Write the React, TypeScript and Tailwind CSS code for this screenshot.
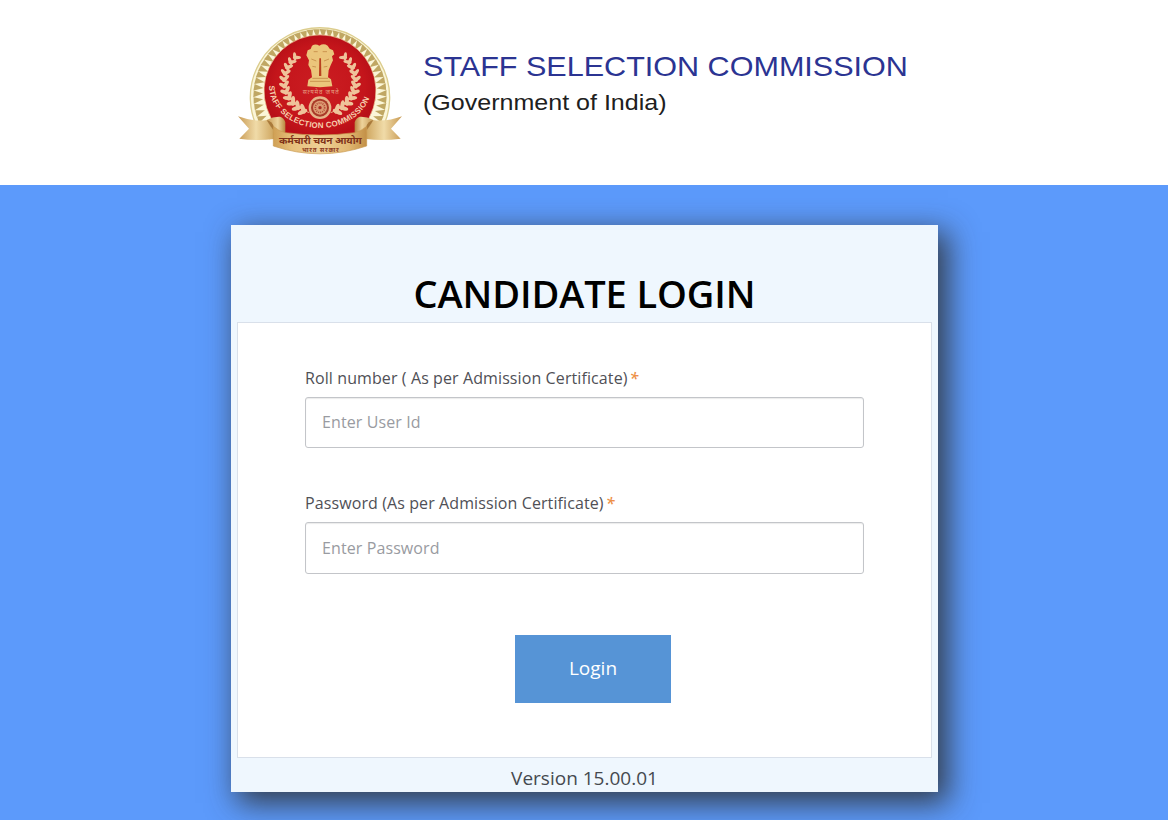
const fields = [
  {
    id: 'roll',
    label: 'Roll number ( As per Admission Certificate)',
    placeholder: 'Enter User Id',
    type: 'text',
    wrapClass: '',
    inputClass: 'h-[51px] pb-[2px]',
  },
  {
    id: 'password',
    label: 'Password (As per Admission Certificate)',
    placeholder: 'Enter Password',
    type: 'password',
    wrapClass: 'mt-[43px]',
    inputClass: 'h-[52px]',
  },
];

const leaves = Array.from({ length: 11 }, (_, i) => 112 + i * 11);
const rays = Array.from({ length: 46 }, (_, i) => 142 + i * (256 / 45));

const Laurel = () => (
  <g>
    <path d="M238 293A107 98 0 0 1 192 138" fill="none" stroke="#e5ae83" strokeWidth="3" />
    {leaves.map((deg, i) => {
      const rad = (deg * Math.PI) / 180;
      const x = 270 + 105 * Math.cos(rad);
      const y = 199 + 97 * Math.sin(rad);
      const size = 1.4 - i * 0.03;
      return (
        <g key={deg} transform={`translate(${x} ${y}) rotate(${deg}) scale(${size})`} fill="#efc39a">
          <ellipse cx="9" cy="3" rx="11" ry="4.5" transform="rotate(42)" />
          <ellipse cx="-8" cy="6" rx="11" ry="4.5" transform="rotate(-42)" />
        </g>
      );
    })}
  </g>
);

const RibbonTail = () => (
  <g>
    <path d="M24 304Q70 321 112 315Q123 338 132 344V372Q82 379 28 371L57 341Z" fill="url(#tail)" />
    <path d="M110 315Q130 304 150 305Q162 308 166 322V358L131 352Q129 330 110 315Z" fill="url(#fold)" />
    <path d="M110 315Q126 319 131 334V346Q123 338 110 315Z" fill="#a97a3a" />
  </g>
);

const Emblem = () => (
  <svg viewBox="0 0 540 450" className="h-[150px] w-[180px] shrink-0" role="img" aria-label="Staff Selection Commission">
    <defs>
      <linearGradient id="gold" x1="0" x2="1">
        <stop offset="0" stopColor="#d0a055" />
        <stop offset=".2" stopColor="#e6c07c" />
        <stop offset=".5" stopColor="#eed096" />
        <stop offset=".8" stopColor="#e1b873" />
        <stop offset="1" stopColor="#c39047" />
      </linearGradient>
      <linearGradient id="tail" x1="0" x2="1">
        <stop offset="0" stopColor="#c99b55" />
        <stop offset=".5" stopColor="#f0dba8" />
        <stop offset="1" stopColor="#cfa65f" />
      </linearGradient>
      <linearGradient id="fold" x1="0" x2="1">
        <stop offset="0" stopColor="#c79a55" />
        <stop offset=".6" stopColor="#edd39b" />
        <stop offset="1" stopColor="#b9853f" />
      </linearGradient>
      <radialGradient id="red">
        <stop offset="0" stopColor="#cb1d22" />
        <stop offset=".8" stopColor="#c4151b" />
        <stop offset="1" stopColor="#b81018" />
      </radialGradient>
      <path id="arc" d="M117 212A154 127 0 0 0 425 212" />
    </defs>

    {/* rim */}
    <path d="M88 350A209 209 0 1 1 452 350Z" fill="#fbf6d8" stroke="#dccd8e" strokeWidth="4" />
    {rays.map((deg) => (
      <path key={deg} d="M171 1L200 -11L199 9Z" fill="#c0a763" transform={`translate(270 242) rotate(${deg})`} />
    ))}
    <path d="M140 366V334A168 168 0 1 1 400 334V366Z" fill="url(#red)" stroke="#f3dda6" strokeWidth="2" />

    <Laurel />
    <g transform="translate(540 0) scale(-1 1)">
      <Laurel />
    </g>

    {/* lion capital */}
    <g fill="#ebc57b">
      <path d="M246 92Q257 85 268 92Q281 84 293 92L299 101L309 106L313 118L306 124L309 136L302 151L296 166L294 187L303 193L307 214Q270 219 232 214L235 194L246 187L243 165L235 150L237 136L229 121L233 106L242 102Z" />
      <path d="M268 130L273 130L274 183L267 183Z" fill="#b9411f" />
      <path d="M251 110H263M278 110H291M244 132L259 138M297 132L282 138M247 154L258 156M292 154L281 156M240 199H300M247 190H294" fill="none" stroke="#cb9550" strokeWidth="3" />
    </g>
    <text x="272" y="236" textAnchor="middle" textLength="108" className="fill-[#e7a184] font-['Noto_Sans_Devanagari','Noto_Sans',sans-serif] text-[18px]">सत्यमेव जयते</text>

    {/* wheel */}
    <circle cx="270" cy="278" r="34" fill="#e7b48a" />
    <circle cx="270" cy="278" r="27" fill="#a93a28" />
    <circle cx="270" cy="278" r="21" fill="#dc9c73" />
    <circle cx="270" cy="278" r="14" fill="none" stroke="#b44a35" strokeWidth="5" strokeDasharray="3 3" />
    <circle cx="270" cy="278" r="5" fill="#a92d22" />

    <text className="fill-[#f6cfae] font-['Liberation_Sans',sans-serif] text-[24px] font-bold">
      <textPath href="#arc" textLength="404">STAFF SELECTION COMMISSION</textPath>
    </text>

    {/* ribbon */}
    <RibbonTail />
    <g transform="translate(540 0) scale(-1 1)">
      <RibbonTail />
    </g>
    <path d="M130 334Q148 350 166 353Q270 367 374 353Q392 350 410 334V393Q270 440 130 393Z" fill="url(#gold)" stroke="#c9994f" strokeWidth="2" />
    <text x="271" y="386" textAnchor="middle" textLength="248" className="fill-[#7e3219] font-['Noto_Sans_Devanagari','Noto_Sans',sans-serif] text-[30px] font-bold">कर्मचारी चयन आयोग</text>
    <text x="271" y="411" textAnchor="middle" textLength="110" className="fill-[#8c3820] font-['Noto_Sans_Devanagari','Noto_Sans',sans-serif] text-[18px] font-bold">भारत सरकार</text>
  </svg>
);

const Header = () => (
  <header className="flex h-[185px] bg-white pt-[15px] pl-[230px]">
    <Emblem />
    <div className="pt-[34px] pl-[13px] font-['Liberation_Sans',sans-serif] whitespace-nowrap">
      <h2 className="origin-left scale-x-[1.072] text-[28.5px] leading-[34px] text-[#2b3492]">STAFF SELECTION COMMISSION</h2>
      <p className="mt-[6px] origin-left scale-x-[1.138] text-[22px] leading-[28px] text-[#202020]">(Government of India)</p>
    </div>
  </header>
);

export default function App() {
  return (
    <div className="h-[820px] w-[1168px] overflow-hidden bg-[#5c9afb] font-['Open_Sans',sans-serif]">
      <Header />
      <main className="mt-[40px] ml-[231px] flex h-[567px] w-[707px] flex-col bg-[#eff7fe] px-[6px] shadow-[8px_9px_28px_2px_rgba(45,45,45,0.85)]">
        <h1 className="h-[97px] pt-[41px] text-center text-[38px] leading-[54px] font-semibold tracking-[-0.1px] text-black">CANDIDATE LOGIN</h1>
        <form className="flex h-[436px] flex-col border border-[#d9e0ea] bg-white px-[67px] pt-[43px]">
          {fields.map((field) => (
            <div key={field.id} className={field.wrapClass}>
              <label htmlFor={field.id} className="block h-[25px] text-[16px] leading-[25px] tracking-[0.1px] whitespace-nowrap text-[#505056]">
                {field.label}
                <span className="ml-[2px] font-semibold text-[#ed9048] italic">*</span>
              </label>
              <input
                id={field.id}
                type={field.type}
                placeholder={field.placeholder}
                className={`mt-[6px] block w-[559px] rounded-[3px] border border-[#c3c5c9] bg-white px-[16px] text-[16px] tracking-[0.1px] shadow-[inset_0_1px_1px_rgba(0,0,0,0.08)] outline-none placeholder:text-[#999ba1] ${field.inputClass}`}
              />
            </div>
          ))}
          <button type="button" className="mt-[61px] ml-[210px] h-[68px] w-[156px] bg-[#5694d6] pb-[2px] text-[19px] font-medium text-white">
            Login
          </button>
        </form>
        <footer className="pt-[6px] text-center text-[19px] leading-[28px] text-[#45494f]">Version 15.00.01</footer>
      </main>
    </div>
  );
}
